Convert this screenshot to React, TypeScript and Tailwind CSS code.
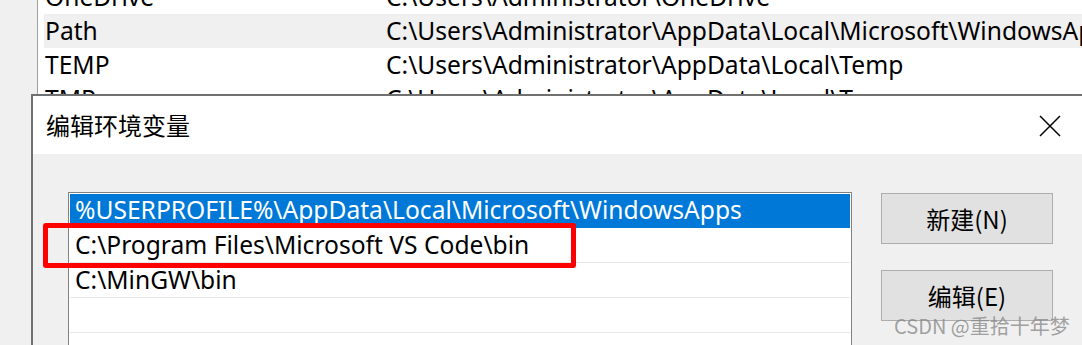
const bgRows = [
  { name: "OneDrive", value: "C:\\Users\\Administrator\\OneDrive", hl: false },
  { name: "Path", value: "C:\\Users\\Administrator\\AppData\\Local\\Microsoft\\WindowsApps", hl: true },
  { name: "TEMP", value: "C:\\Users\\Administrator\\AppData\\Local\\Temp", hl: false },
  { name: "TMP", value: "C:\\Users\\Administrator\\AppData\\Local\\Temp", hl: false },
];

const paths = [
  "%USERPROFILE%\\AppData\\Local\\Microsoft\\WindowsApps",
  "C:\\Program Files\\Microsoft VS Code\\bin",
  "C:\\MinGW\\bin",
  "",
  "",
];

const App = () => {
  return (
    <div className="relative w-[1082px] h-[345px] overflow-hidden bg-white text-black font-['Noto_Sans','Noto_Sans_CJK_SC',sans-serif]">
      {/* background window: env var table */}
      <div className="flex h-full">
        <div className="w-[38px] h-full bg-[#f0f0f0] border-r border-[#a0a0a0] shrink-0" />
        <div className="flex flex-col pl-[6px] mt-[-20px] flex-1">
          {bgRows.map((r) => (
            <div
              key={r.name}
              className={`flex items-center h-[34px] pl-[1px] text-[24.6px] whitespace-nowrap ${r.hl ? "bg-[#f0f0f0]" : ""}`}
            >
              <span className="w-[341px] shrink-0">{r.name}</span>
              <span>{r.value}</span>
            </div>
          ))}
        </div>
      </div>

      {/* dialog */}
      <div className="absolute left-[31px] top-[94px] w-[1070px] h-[280px] border-l-2 border-t-2 border-[#707070] flex flex-col">
        <div className="h-[58px] bg-white flex items-center justify-between pl-[13px] pr-[40px] shrink-0">
          <span className="text-[24px] font-['Noto_Sans_CJK_SC',sans-serif]">编辑环境变量</span>
          <svg width="22" height="22" viewBox="0 0 22 22" className="mt-[2px]">
            <path d="M1 1L21 21M21 1L1 21" stroke="#000" strokeWidth="1.5" fill="none" />
          </svg>
        </div>
        <div className="flex-1 bg-[#f0f0f0] flex pt-[38px] pl-[35px] gap-[29px]">
          <div className="w-[784px] h-[200px] border border-[#828282] bg-white p-[1px] shrink-0">
            {paths.map((p, i) => (
              <div
                key={i}
                className={`flex items-center pl-[5px] text-[24.6px] whitespace-nowrap ${i === 0 ? "bg-[#0078d7] text-white h-[34px] pb-[1px]" : "h-[35px] pt-[1px] border-b border-[#e8e8e8]"}`}
              >
                {p}
              </div>
            ))}
          </div>
          <div className="flex flex-col gap-[26px] pt-[1px]">
            <button className="w-[172px] h-[51px] bg-[#e1e1e1] border border-[#adadad] text-[24px] font-['Noto_Sans_CJK_SC',sans-serif]">
              新建(N)
            </button>
            <button className="w-[172px] h-[51px] bg-[#e1e1e1] border border-[#adadad] text-[24px] font-['Noto_Sans_CJK_SC',sans-serif]">
              编辑(E)
            </button>
          </div>
        </div>
      </div>

      {/* annotation */}
      <div className="absolute left-[43px] top-[223px] w-[533px] h-[45px] border-[5px] border-[#ff0000] rounded-[3px]" />

      {/* watermark */}
      <div className="absolute left-[894px] top-[311px] text-[20px] text-[#8a8a8a]/80 font-['Noto_Sans_CJK_SC',sans-serif] whitespace-nowrap">
        CSDN @重拾十年梦
      </div>
    </div>
  );
};

export default App;
